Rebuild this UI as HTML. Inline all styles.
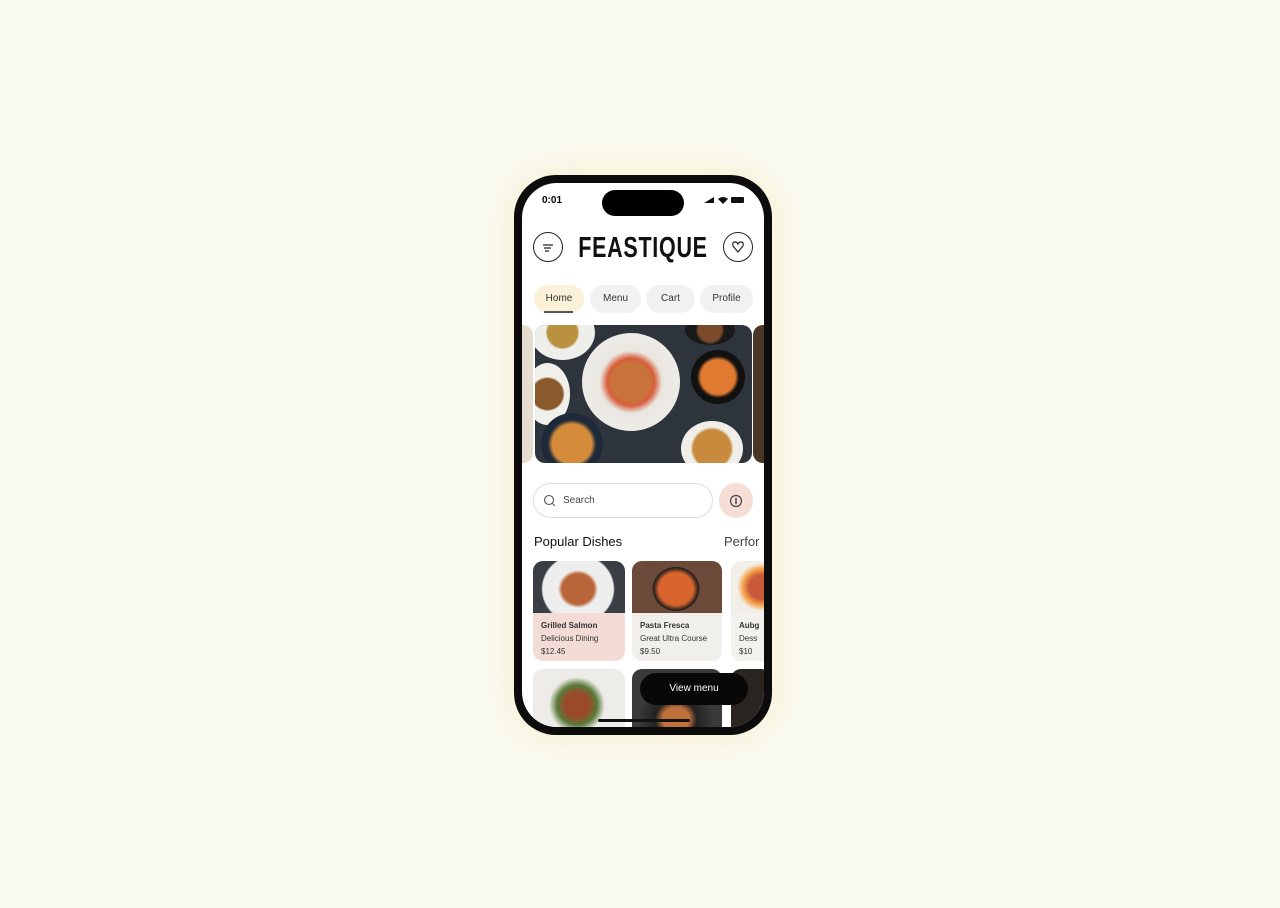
<!DOCTYPE html>
<html><head><style>
*{margin:0;padding:0;box-sizing:border-box}
body{width:1280px;height:908px;background:#fbfaef;position:relative;overflow:hidden;font-family:"Liberation Sans",sans-serif}
.a{position:absolute}
.phone{left:514px;top:175px;width:258px;height:560px;background:#0c0c0c;border-radius:42px;box-shadow:0 0 30px rgba(240,225,170,.5)}
.screen{left:522px;top:183px;width:242px;height:544px;background:#fff;border-radius:35px;overflow:hidden}
.chip{top:102px;height:28px;border-radius:14px;background:#f1f1f1;font-size:10px;color:#333;text-align:center;line-height:28px}
.plate{border-radius:50%;position:absolute}
</style></head><body>
<div class="a phone"></div>
<div class="a screen">
 <div class="a" style="left:20px;top:12px;font-size:10px;font-weight:bold">0:01</div>
 <div class="a" style="left:80px;top:7px;width:82px;height:26px;background:#000;border-radius:13px"></div>
 <svg class="a" style="left:182px;top:12px" width="40" height="10"><path d="M0 8L10 2V8Z" fill="#111"/><path d="M14 4Q19 0 24 4L19 9Z" fill="#111"/><rect x="27" y="2" width="13" height="6" rx="1" fill="#111"/></svg>
 <div class="a" style="left:11px;top:49px;width:30px;height:30px;border:1.3px solid #222;border-radius:50%"></div>
 <svg class="a" style="left:18px;top:57px" width="16" height="14"><path d="M3 5H13M4 8H11M5 11H9" stroke="#222" stroke-width="1.3"/></svg>
 <div class="a" style="left:0;width:242px;top:49px;text-align:center;font-size:29px;font-weight:bold;color:#111;transform:scaleX(0.74);letter-spacing:1px">FEASTIQUE</div>
 <div class="a" style="left:201px;top:49px;width:30px;height:30px;border:1.3px solid #222;border-radius:50%"></div>
 <svg class="a" style="left:209px;top:57px" width="14" height="14"><path d="M7 12L2 6Q1 2 4 2Q6 2 7 4Q8 2 10 2Q13 2 12 6Z" fill="none" stroke="#222" stroke-width="1.2"/></svg>
 <div class="a chip" style="left:12px;width:50px;background:#fbf1d8">Home</div>
 <div class="a" style="left:22px;top:128px;width:29px;height:1.5px;background:#555"></div>
 <div class="a chip" style="left:68px;width:51px">Menu</div>
 <div class="a chip" style="left:124px;width:49px">Cart</div>
 <div class="a chip" style="left:178px;width:53px">Profile</div>
 <div class="a" style="left:0;top:142px;width:11px;height:138px;background:#e6ddd0;border-radius:0 10px 10px 0"></div>
 <div class="a" style="left:231px;top:142px;width:11px;height:138px;background:#4a3526;border-radius:10px 0 0 10px"></div>
 <div class="a" style="left:13px;top:142px;width:217px;height:138px;background:#2e343c;border-radius:10px;overflow:hidden">
  <div class="plate" style="left:47px;top:8px;width:98px;height:98px;background:radial-gradient(circle,#c8733a 0 28%,#d85c3c 34%,#e9e6e0 45%,#f3f2ef 100%)"></div>
  <div class="plate" style="left:-5px;top:-20px;width:65px;height:55px;background:radial-gradient(circle,#b8923e 0 35%,#eeeeea 40%)"></div>
  <div class="plate" style="left:-10px;top:38px;width:45px;height:62px;background:radial-gradient(circle,#8a5a2c 0 40%,#f0efea 45%)"></div>
  <div class="plate" style="left:6px;top:88px;width:62px;height:62px;background:radial-gradient(circle,#d58c3a 0 45%,#1e2a3a 55%)"></div>
  <div class="plate" style="left:156px;top:25px;width:54px;height:54px;background:radial-gradient(circle,#e07a30 0 45%,#111 55%)"></div>
  <div class="plate" style="left:146px;top:96px;width:62px;height:55px;background:radial-gradient(circle,#c88a3c 0 45%,#f0eee8 52%)"></div>
  <div class="plate" style="left:150px;top:-10px;width:50px;height:30px;background:radial-gradient(circle,#7a4a2a 0 40%,#1a1a1a 50%)"></div>
 </div>
 <div class="a" style="left:11px;top:300px;width:180px;height:35px;border:1px solid #ddd;border-radius:18px"></div>
 <svg class="a" style="left:21px;top:311px" width="14" height="14"><circle cx="6" cy="6" r="4.5" fill="none" stroke="#555" stroke-width="1.1"/><path d="M9.5 9.5L12 12" stroke="#555"/></svg>
 <div class="a" style="left:41px;top:312px;font-size:10px;color:#444">Search</div>
 <div class="a" style="left:197px;top:300px;width:34px;height:35px;background:#f6ddd6;border-radius:17px"></div>
 <svg class="a" style="left:207px;top:311px" width="14" height="14"><circle cx="7" cy="7" r="5.5" fill="none" stroke="#444" stroke-width="1.2"/><path d="M7 4V10" stroke="#444" stroke-width="1.5"/></svg>
 <div class="a" style="left:12px;top:351px;font-size:13px;color:#111">Popular Dishes</div>
 <div class="a" style="left:202px;top:351px;font-size:13px;color:#444">Perfor</div>
 <div class="a" style="left:11px;top:378px;width:92px;height:100px;border-radius:10px;overflow:hidden;background:#f3dcd6">
  <div style="height:52px;background:radial-gradient(ellipse 40px 38px at 45px 28px,#b8653a 0 40%,#eee 50%,#eee 88%,#3a3f46 92%)"></div>
  <div style="padding:6px 8px;font-size:8px;color:#333;line-height:13px"><b>Grilled Salmon</b><br>Delicious Dining<br>$12.45</div>
 </div>
 <div class="a" style="left:110px;top:378px;width:90px;height:100px;border-radius:10px;overflow:hidden;background:#f1efec">
  <div style="height:52px;background:radial-gradient(ellipse 38px 36px at 44px 28px,#d8652e 0 45%,#1b1b1b 60%,#6b4a3a 62%)"></div>
  <div style="padding:6px 8px;font-size:8px;color:#333;line-height:13px"><b>Pasta Fresca</b><br>Great Ultra Course<br>$9.50</div>
 </div>
 <div class="a" style="left:209px;top:378px;width:40px;height:100px;border-radius:10px;overflow:hidden;background:#f3f1ee">
  <div style="height:52px;background:radial-gradient(circle at 30px 26px,#c85a3a 0 30%,#f5a24a 45%,#f2efe8 60%)"></div>
  <div style="padding:6px 8px;font-size:8px;color:#333;line-height:13px"><b>Aubg</b><br>Dess<br>$10</div>
 </div>
 <div class="a" style="left:11px;top:486px;width:92px;height:70px;border-radius:10px;background:radial-gradient(ellipse 40px 40px at 44px 36px,#9a4a2a 0 30%,#5a7a3a 50%,#eeece8 70%)"></div>
 <div class="a" style="left:110px;top:486px;width:90px;height:70px;border-radius:10px;background:radial-gradient(ellipse 38px 34px at 44px 50px,#c0703a 0 35%,#222 55%,#3a3a3a)"></div>
 <div class="a" style="left:209px;top:486px;width:40px;height:70px;border-radius:10px;background:#2a2520"></div>
 <div class="a" style="left:118px;top:490px;width:108px;height:32px;background:#080808;border-radius:16px;color:#fff;font-size:10px;text-align:center;line-height:32px">View menu</div>
 <div class="a" style="left:76px;top:536px;width:92px;height:3px;background:#111;border-radius:2px"></div>
</div>
</body></html>
